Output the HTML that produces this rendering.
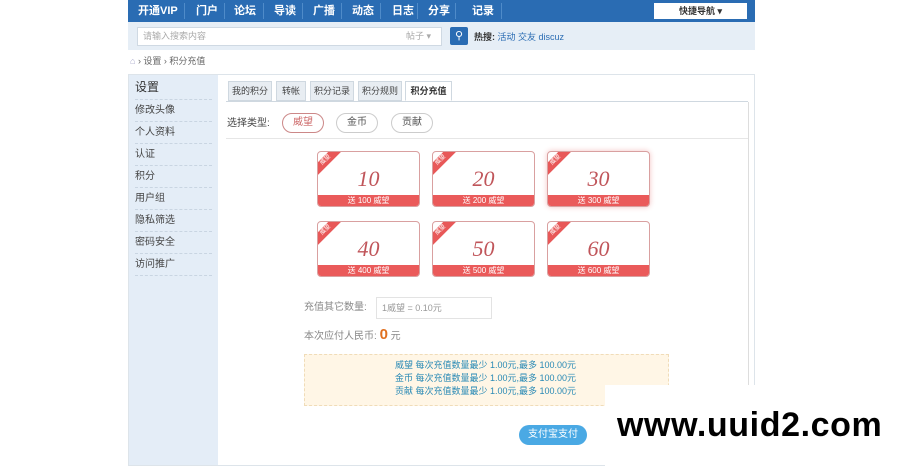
<!DOCTYPE html><html><head><meta charset="utf-8"><style>
*{margin:0;padding:0;box-sizing:border-box}
body{width:900px;height:475px;background:#fff;font-family:"Liberation Sans","Noto Sans CJK SC",sans-serif;font-size:11px;color:#333;position:relative;overflow:hidden}
.a{position:absolute}
.nav{left:128px;top:0;width:627px;height:22px;background:#2a6cb3}
.nav span{position:absolute;top:5px;color:#fff;font-size:11px;font-weight:bold;line-height:12px}
.nav i{position:absolute;top:3px;width:1px;height:16px;background:#4f8bc9}
.sr{left:128px;top:22px;width:627px;height:28px;background:#e6eef6}
.card{width:103px;height:56px;border:1px solid #d9a0a0;border-radius:4px;background:#fff;overflow:hidden}
.card b{position:absolute;left:0;right:0;top:14px;text-align:center;font:italic 22px "Liberation Serif",serif;color:#c0555a}
.card s{position:absolute;left:0;right:0;bottom:0;height:11px;background:#ea5a5a;color:#fff;font-size:8px;text-align:center;line-height:11px;text-decoration:none}
.card u{position:absolute;left:-12px;top:4px;width:40px;height:9px;background:#e85858;transform:rotate(-45deg);text-decoration:none;color:#fff;font-size:6px;text-align:center;line-height:9px}
.side div{height:22px;border-bottom:1px dashed #c9d5e2;margin:0 6px;line-height:22px;font-size:10px;color:#444}
.tab{top:81px;height:20px;border:1px solid #cfd8e0;background:#e8edf2;font-size:9px;line-height:18px;text-align:center;color:#444}
.pill{top:113px;height:20px;border:1px solid #ccc;border-radius:10px;text-align:center;line-height:18px;font-size:10px;color:#555}
</style></head><body>
<div class="a nav">
<span style="left:10px">开通VIP</span><i style="left:56px"></i>
<span style="left:68px">门户</span><i style="left:96px"></i>
<span style="left:106px">论坛</span><i style="left:135px"></i>
<span style="left:146px">导读</span><i style="left:174px"></i>
<span style="left:185px">广播</span><i style="left:213px"></i>
<span style="left:224px">动态</span><i style="left:252px"></i>
<span style="left:264px">日志</span><i style="left:289px"></i>
<span style="left:300px">分享</span><i style="left:327px"></i>
<span style="left:344px">记录</span><i style="left:373px"></i>
<div class="a" style="left:526px;top:3px;width:93px;height:16px;background:#fff;color:#333;font-size:9px;font-weight:bold;text-align:center;line-height:16px">快捷导航 ▾</div>
</div>
<div class="a sr">
<div class="a" style="left:9px;top:5px;width:305px;height:19px;background:#fff;border:1px solid #cfd9e3;color:#aaa;font-size:9px;line-height:17px;padding-left:5px">请输入搜索内容<span style="position:absolute;right:10px">帖子 ▾</span></div>
<div class="a" style="left:322px;top:5px;width:18px;height:18px;background:#2a6cb3;border-radius:2px;color:#fff;text-align:center;line-height:18px;font-size:11px">&#9906;</div>
<div class="a" style="left:346px;top:9px;font-size:9px;line-height:12px"><b>热搜:</b> <span style="color:#2a6cb3">活动 交友 discuz</span></div>
</div>
<div class="a" style="left:130px;top:55px;font-size:9px;color:#666;line-height:12px"><span style="color:#aac">&#8962;</span> › 设置 › 积分充值</div>
<div class="a" style="left:128px;top:74px;width:627px;height:392px;border:1px solid #dde4ea"></div>
<div class="a side" style="left:129px;top:75px;width:89px;height:390px;background:#e4edf7">
<div style="font-size:12px;height:25px;line-height:25px;color:#333">设置</div>
<div>修改头像</div><div>个人资料</div><div>认证</div><div>积分</div><div>用户组</div><div>隐私筛选</div><div>密码安全</div><div>访问推广</div>
</div>
<div class="a" style="left:226px;top:101px;width:522px;height:1px;background:#cfd8e0"></div>
<div class="a tab" style="left:228px;width:44px">我的积分</div>
<div class="a tab" style="left:276px;width:30px">转帐</div>
<div class="a tab" style="left:310px;width:44px">积分记录</div>
<div class="a tab" style="left:358px;width:44px">积分规则</div>
<div class="a tab" style="left:405px;width:47px;background:#fff;border-bottom-color:#fff;font-weight:bold;color:#333">积分充值</div>
<div class="a" style="left:227px;top:117px;font-size:10px;color:#444;line-height:14px">选择类型:</div>
<div class="a pill" style="left:282px;width:42px;border-color:#c88;color:#c66">威望</div>
<div class="a pill" style="left:336px;width:42px">金币</div>
<div class="a pill" style="left:391px;width:42px">贡献</div>
<div class="a" style="left:226px;top:138px;width:522px;height:1px;background:#e6e6e6"></div>
<div class="a" style="left:748px;top:102px;width:1px;height:290px;background:#ddd"></div>
<div class="a card" style="left:317px;top:151px"><u>威望</u><b>10</b><s>送 100 威望</s></div>
<div class="a card" style="left:432px;top:151px"><u>威望</u><b>20</b><s>送 200 威望</s></div>
<div class="a card" style="left:547px;top:151px;box-shadow:0 0 6px #f3c3c3"><u>威望</u><b>30</b><s>送 300 威望</s></div>
<div class="a card" style="left:317px;top:221px"><u>威望</u><b>40</b><s>送 400 威望</s></div>
<div class="a card" style="left:432px;top:221px"><u>威望</u><b>50</b><s>送 500 威望</s></div>
<div class="a card" style="left:547px;top:221px"><u>威望</u><b>60</b><s>送 600 威望</s></div>
<div class="a" style="left:304px;top:301px;font-size:10px;color:#888;line-height:14px">充值其它数量:</div>
<div class="a" style="left:376px;top:297px;width:116px;height:22px;border:1px solid #e3e3e3;font-size:9px;color:#999;line-height:20px;padding-left:5px">1威望 = 0.10元</div>
<div class="a" style="left:304px;top:326px;font-size:10px;color:#888;line-height:18px">本次应付人民币: <b style="color:#e07020;font-size:15px">0</b> 元</div>
<div class="a" style="left:304px;top:354px;width:365px;height:52px;background:#fff6e6;border:1px dashed #f0dcb8;color:#2a8ab5;font-size:9px;line-height:13px;padding:4px 0 0 90px">威望 每次充值数量最少 1.00元,最多 100.00元<br>金币 每次充值数量最少 1.00元,最多 100.00元<br>贡献 每次充值数量最少 1.00元,最多 100.00元</div>
<div class="a" style="left:519px;top:425px;width:68px;height:20px;border-radius:10px;background:#4aa9e4;color:#fff;font-size:10px;text-align:center;line-height:20px">支付宝支付</div>
<div class="a" style="left:605px;top:385px;width:295px;height:90px;background:#fff"></div>
<div class="a" style="left:617px;top:407px;font:bold 34px/36px 'Liberation Sans',sans-serif;color:#000;letter-spacing:0.6px">www.uuid2.com</div>
</body></html>
